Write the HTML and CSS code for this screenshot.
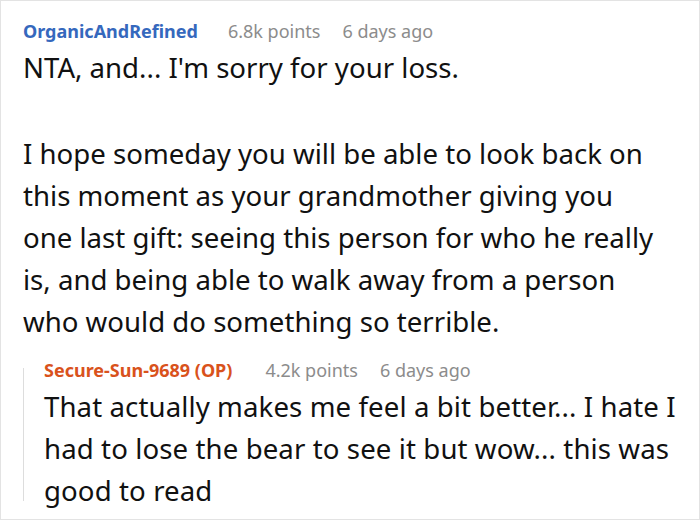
FILE: index.html
```html
<!DOCTYPE html>
<html lang="en">
<head>
<meta charset="utf-8">
<title>Comments</title>
<link rel="stylesheet" href="styles.css">
</head>
<body>
<div class="frame">
  <div class="comment">
    <div class="meta">
      <span class="author">OrganicAndRefined</span>
      <span class="info">6.8k points</span>
      <span class="info">6 days ago</span>
    </div>
    <div class="body main-body">
      <p>NTA, and... I'm sorry for your loss.</p>
      <p>I hope someday you will be able to look back on this moment as your grandmother giving you one last gift: seeing this person for who he really is, and being able to walk away from a person who would do something so terrible.</p>
    </div>
  </div>
  <div class="reply">
    <div class="thread-line"></div>
    <div class="reply-content">
      <div class="meta">
        <span class="author op">Secure-Sun-9689 (OP)</span>
        <span class="info">4.2k points</span>
        <span class="info">6 days ago</span>
      </div>
      <div class="body reply-body">
        <p>That actually makes me feel a bit better... I hate I had to lose the bear to see it but wow... this was good to read</p>
      </div>
    </div>
  </div>
</div>
</body>
</html>
```

FILE: styles.css
```css
html, body {
  margin: 0;
  padding: 0;
  background: #ffffff;
}

.frame {
  width: 700px;
  height: 520px;
  box-sizing: border-box;
  border: 1px solid #e3e3e3;
  padding: 18px 16px 0 22px;
  font-family: "Noto Sans", "Open Sans", sans-serif;
  color: #111111;
  overflow: hidden;
}

.meta {
  display: flex;
  align-items: baseline;
  height: 24px;
  line-height: 24px;
  font-size: 18px;
  white-space: nowrap;
}

.author {
  font-weight: 700;
  color: #3568bd;
  margin-right: 30px;
}

.author.op {
  color: #d9521c;
  margin-right: 33px;
}

.info {
  color: #8c8c8c;
  margin-right: 22px;
}

.body {
  margin-top: 3px;
  font-size: 27.6px;
  line-height: 42px;
}

.main-body {
  padding-right: 20px;
}

.body p {
  margin: 0 0 44px 0;
}

.body p:last-child {
  margin-bottom: 0;
}

.reply {
  display: flex;
  margin-top: 16px;
}

.thread-line {
  width: 1px;
  background: #dddddd;
  margin: 10px 20px 10px 0;
  flex: none;
}

.reply-content {
  flex: 1;
}

.reply-body {
  letter-spacing: 0.1px;
}
```
